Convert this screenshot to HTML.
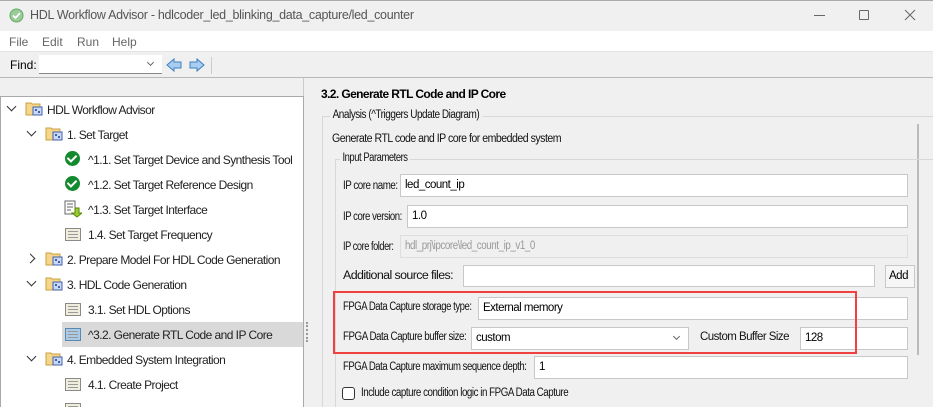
<!DOCTYPE html>
<html><head><meta charset="utf-8"><style>
*{box-sizing:border-box;margin:0;padding:0}
html,body{width:933px;height:407px;overflow:hidden}
body{background:#f0f0f0;font-family:"Liberation Sans",sans-serif;font-size:12px;color:#000;position:relative}
.a{position:absolute;white-space:nowrap}
.t{font-size:12px;letter-spacing:-0.55px;color:#222}
.r{font-size:11.5px;letter-spacing:-0.55px;color:#111;transform-origin:0 0}
.in{position:absolute;background:#fff;border:1px solid #c8c8c8;height:23px;padding:4px 4px;font-size:11.5px;letter-spacing:-0.5px}
.fold{position:absolute;width:18px;height:16px}
.doc{position:absolute;width:16px;height:13px;border:1px solid #8a8a8a;background:#efeedd}
.doc:before{content:"";position:absolute;left:2px;top:2px;width:10px;height:7px;background:repeating-linear-gradient(#999 0 1px,transparent 1px 3px)}
.ck{position:absolute;width:15px;height:15px;border-radius:50%;background:#138a2e}
.ck:after{content:"";position:absolute;left:4px;top:2px;width:4px;height:7px;border:solid #fff;border-width:0 2px 2px 0;transform:rotate(45deg)}
.chev{position:absolute;width:7px;height:7px;border:solid #333;border-width:0 1.5px 1.5px 0;transform:rotate(45deg)}
</style></head><body>
<div class="a" style="left:0;top:0;width:933px;height:31px;background:#f0f0f0;border-top:1px solid #aaa"></div>
<svg class="a" style="left:9px;top:8px" width="15" height="15"><circle cx="7.5" cy="7.5" r="6.5" fill="#9c9" stroke="#6a6" /><path d="M4 7.5l2.5 2.5 4.5-5" stroke="#fff" stroke-width="1.8" fill="none"/></svg>
<div class="a" style="left:30px;top:8px;font-size:12.5px;letter-spacing:-0.3px;color:#555">HDL Workflow Advisor - hdlcoder_led_blinking_data_capture/led_counter</div>
<div class="a" style="left:814px;top:15px;width:11px;height:1px;background:#666"></div>
<div class="a" style="left:859px;top:10px;width:10px;height:10px;border:1px solid #666;border-radius:1px"></div>
<svg class="a" style="left:904px;top:9px" width="12" height="12"><path d="M1 1L11 11M11 1L1 11" stroke="#666" stroke-width="1"/></svg>
<div class="a" style="left:0;top:31px;width:933px;height:20px;background:#fff"></div>
<div class="a" style="left:9px;top:35px;font-size:12px;color:#666">File</div>
<div class="a" style="left:42px;top:35px;font-size:12px;color:#666">Edit</div>
<div class="a" style="left:77px;top:35px;font-size:12px;color:#666">Run</div>
<div class="a" style="left:112px;top:35px;font-size:12px;color:#666">Help</div>
<div class="a" style="left:0;top:51px;width:933px;height:27px;background:#f0f0f0;border-top:1px solid #e4e4e4;border-bottom:1px solid #b8b8b8"></div>
<div class="a" style="left:10px;top:58px;font-size:12px">Find:</div>
<div class="a" style="left:39px;top:55px;width:123px;height:19px;background:#fff;border-bottom:1px solid #888"></div>
<div class="chev" style="left:148px;top:60px;width:5px;height:5px;border-color:#666;border-width:0 1px 1px 0"></div>
<svg class="a" style="left:166px;top:57px" width="40" height="16"><path d="M1 8L8 2V5H15V11H8V14Z" fill="#a8cdf0" stroke="#3f7fc0"/><path d="M38 8L31 2V5H24V11H31V14Z" fill="#a8cdf0" stroke="#3f7fc0"/></svg>
<div class="a" style="left:211px;top:57px;width:1px;height:17px;background:#ccc"></div>
<div class="a" style="left:0;top:78px;width:304px;height:18px;background:#f0f0f0;border-right:1px solid #ccc"></div>
<div class="a" style="left:0;top:96px;width:304px;height:311px;background:#fff;border:1px solid #aaa;border-bottom:none"></div>
<div class="a" style="left:62px;top:322px;width:241px;height:25px;background:#d9d9d9"></div>
<div class="a" style="left:306px;top:322px;width:1px;height:20px;border-left:2px dotted #999"></div>
<div class="chev" style="left:8px;top:103px"></div>
<svg class="fold" style="left:25px;top:100px" viewBox="0 0 18 16"><path d="M1 3h5l1 1h8v11H1z" fill="#f5d68a" stroke="#c9a040"/><rect x="8" y="7" width="9" height="8" fill="#c8d8f5" stroke="#4060b0"/><rect x="10" y="9" width="2" height="2" fill="#4060b0"/><rect x="13" y="11" width="2" height="2" fill="#4060b0"/></svg>
<div class="a t" style="left:47px;top:103px">HDL Workflow Advisor</div>
<div class="chev" style="left:28px;top:128px"></div>
<svg class="fold" style="left:45px;top:125px" viewBox="0 0 18 16"><path d="M1 3h5l1 1h8v11H1z" fill="#f5d68a" stroke="#c9a040"/><rect x="8" y="7" width="9" height="8" fill="#c8d8f5" stroke="#4060b0"/><rect x="10" y="9" width="2" height="2" fill="#4060b0"/><rect x="13" y="11" width="2" height="2" fill="#4060b0"/></svg>
<div class="a t" style="left:67px;top:128px">1. Set Target</div>
<div class="ck" style="left:65px;top:151px"></div>
<div class="a t" style="left:88px;top:153px">^1.1. Set Target Device and Synthesis Tool</div>
<div class="ck" style="left:65px;top:176px"></div>
<div class="a t" style="left:88px;top:178px">^1.2. Set Target Reference Design</div>
<svg class="a" style="left:64px;top:200px" width="18" height="18"><rect x="1" y="1" width="10" height="13" fill="#fff" stroke="#666"/><path d="M3 4h6M3 7h6M3 10h4" stroke="#666"/><path d="M11 8v5h-3l5 4 5-4h-3V8z" fill="#9c3" stroke="#580"/></svg>
<div class="a t" style="left:88px;top:203px">^1.3. Set Target Interface</div>
<div class="doc" style="left:65px;top:228px"></div>
<div class="a t" style="left:88px;top:228px">1.4. Set Target Frequency</div>
<div class="chev" style="left:27px;top:255px;transform:rotate(-45deg)"></div>
<svg class="fold" style="left:45px;top:250px" viewBox="0 0 18 16"><path d="M1 3h5l1 1h8v11H1z" fill="#f5d68a" stroke="#c9a040"/><rect x="8" y="7" width="9" height="8" fill="#c8d8f5" stroke="#4060b0"/><rect x="10" y="9" width="2" height="2" fill="#4060b0"/><rect x="13" y="11" width="2" height="2" fill="#4060b0"/></svg>
<div class="a t" style="left:67px;top:253px">2. Prepare Model For HDL Code Generation</div>
<div class="chev" style="left:28px;top:278px"></div>
<svg class="fold" style="left:45px;top:275px" viewBox="0 0 18 16"><path d="M1 3h5l1 1h8v11H1z" fill="#f5d68a" stroke="#c9a040"/><rect x="8" y="7" width="9" height="8" fill="#c8d8f5" stroke="#4060b0"/><rect x="10" y="9" width="2" height="2" fill="#4060b0"/><rect x="13" y="11" width="2" height="2" fill="#4060b0"/></svg>
<div class="a t" style="left:67px;top:278px">3. HDL Code Generation</div>
<div class="doc" style="left:65px;top:303px"></div>
<div class="a t" style="left:88px;top:303px">3.1. Set HDL Options</div>
<div class="doc" style="left:65px;top:328px;background:#a9cbe8;border-color:#5b88b0"></div>
<div class="a t" style="left:88px;top:328px">^3.2. Generate RTL Code and IP Core</div>
<div class="chev" style="left:28px;top:353px"></div>
<svg class="fold" style="left:45px;top:350px" viewBox="0 0 18 16"><path d="M1 3h5l1 1h8v11H1z" fill="#f5d68a" stroke="#c9a040"/><rect x="8" y="7" width="9" height="8" fill="#c8d8f5" stroke="#4060b0"/><rect x="10" y="9" width="2" height="2" fill="#4060b0"/><rect x="13" y="11" width="2" height="2" fill="#4060b0"/></svg>
<div class="a t" style="left:67px;top:353px">4. Embedded System Integration</div>
<div class="doc" style="left:65px;top:378px"></div>
<div class="a t" style="left:88px;top:378px">4.1. Create Project</div>
<div class="doc" style="left:65px;top:403px"></div>
<div class="a" style="left:321px;top:87px;font-size:12px;font-weight:bold;letter-spacing:-0.6px">3.2. Generate RTL Code and IP Core</div>
<div class="a" style="left:322px;top:116px;width:611px;height:291px;border-left:1px solid #d8d8d8;border-top:1px solid #d8d8d8"></div>
<div class="a r" style="left:330px;top:109px;background:#f0f0f0;padding:0 3px;transform:scaleX(.87)">Analysis (^Triggers Update Diagram)</div>
<div class="a" style="left:917px;top:124px;width:2px;height:231px;background:#bbb"></div>
<div class="a r" style="left:332px;top:133px;transform:scaleX(.92)">Generate RTL code and IP core for embedded system</div>
<div class="a" style="left:335px;top:159px;width:598px;height:248px;border-left:1px solid #d8d8d8;border-top:1px solid #d8d8d8"></div>
<div class="a r" style="left:340px;top:152px;background:#f0f0f0;padding:0 3px;transform:scaleX(.82)">Input Parameters</div>
<div class="a r" style="left:343px;top:180px;transform:scaleX(.85)">IP core name:</div>
<div class="in" style="left:400px;top:174px;width:508px">led_count_ip</div>
<div class="a r" style="left:343px;top:211px;transform:scaleX(.83)">IP core version:</div>
<div class="in" style="left:407px;top:205px;width:501px">1.0</div>
<div class="a r" style="left:343px;top:241px;transform:scaleX(.8)">IP core folder:</div>
<div class="in" style="left:400px;top:235px;width:508px;background:#f0f0f0;border-color:#ddd;color:#999"><span style="display:inline-block;transform:scaleX(.85);transform-origin:0 0">hdl_prj\ipcore\led_count_ip_v1_0</span></div>
<div class="a r" style="left:343px;top:270px;transform:scaleX(1.08)">Additional source files:</div>
<div class="in" style="left:463px;top:265px;width:412px;height:22px"></div>
<div class="in" style="left:885px;top:265px;width:30px;height:23px;background:#f6f6f6;padding:4px 3px">Add</div>
<div class="a r" style="left:343px;top:301px;transform:scaleX(.83)">FPGA Data Capture storage type:</div>
<div class="in" style="left:478px;top:297px;width:430px">External memory</div>
<div class="a r" style="left:343px;top:331px;transform:scaleX(.85)">FPGA Data Capture buffer size:</div>
<div class="in" style="left:471px;top:327px;width:218px">custom</div>
<div class="chev" style="left:674px;top:334px;width:5px;height:5px;border-color:#666;border-width:0 1px 1px 0"></div>
<div class="a r" style="left:700px;top:331px">Custom Buffer Size</div>
<div class="in" style="left:800px;top:327px;width:108px">128</div>
<div class="a" style="left:333px;top:291px;width:524px;height:63px;border:2px solid #f04040"></div>
<div class="a r" style="left:343px;top:361px;transform:scaleX(.83)">FPGA Data Capture maximum sequence depth:</div>
<div class="in" style="left:534px;top:356px;width:374px">1</div>
<div class="a" style="left:342px;top:387px;width:13px;height:13px;border:1px solid #333;border-radius:3px;background:#fff"></div>
<div class="a r" style="left:361px;top:387px;transform:scaleX(.85)">Include capture condition logic in FPGA Data Capture</div>
</body></html>
